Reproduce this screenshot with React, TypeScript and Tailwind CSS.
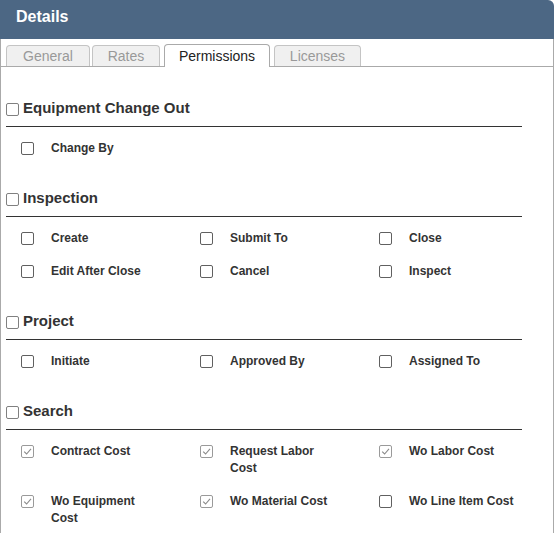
import type { ReactNode } from 'react';

type Item = { label: string; checked?: boolean };
type Section = { title: string; items: Item[] };

const sections: Section[] = [
  { title: 'Equipment Change Out', items: [{ label: 'Change By' }] },
  {
    title: 'Inspection',
    items: [
      { label: 'Create' },
      { label: 'Submit To' },
      { label: 'Close' },
      { label: 'Edit After Close' },
      { label: 'Cancel' },
      { label: 'Inspect' },
    ],
  },
  {
    title: 'Project',
    items: [{ label: 'Initiate' }, { label: 'Approved By' }, { label: 'Assigned To' }],
  },
  {
    title: 'Search',
    items: [
      { label: 'Contract Cost', checked: true },
      { label: 'Request Labor Cost', checked: true },
      { label: 'Wo Labor Cost', checked: true },
      { label: 'Wo Equipment Cost', checked: true },
      { label: 'Wo Material Cost', checked: true },
      { label: 'Wo Line Item Cost' },
    ],
  },
];

const tabs = [
  { name: 'General', w: 'w-[84px]', ml: 'ml-[5px]' },
  { name: 'Rates', w: 'w-[68px]', ml: 'ml-[2px]' },
  { name: 'Permissions', w: 'w-[106px]', ml: 'ml-[4px]', active: true },
  { name: 'Licenses', w: 'w-[87px]', ml: 'ml-[4px]' },
];

function Box({ checked, light }: { checked?: boolean; light?: boolean }) {
  return (
    <span
      className={`flex h-[13px] w-[13px] shrink-0 items-center justify-center rounded-[2px] border bg-white ${
        checked ? 'border-[#9a9a9a]' : light ? 'border-[#808080]' : 'border-[#606060]'
      }`}
    >
      {checked && (
        <svg width="9" height="9" viewBox="0 0 9 9">
          <polyline points="1.2,4.6 3.6,7 8,1.8" fill="none" stroke="#8a8a8a" strokeWidth="1.1" />
        </svg>
      )}
    </span>
  );
}

function Tab({ name, w, ml, active }: { name: string; w: string; ml: string; active?: boolean }) {
  return (
    <div
      className={`${w} ${ml} flex items-center justify-center rounded-t-[4px] border border-b-0 text-[14px] ${
        active
          ? 'mb-[-1px] h-[23px] border-[#aaa] bg-white text-[#222]'
          : 'h-[21px] border-[#c4c4c4] bg-[#f0f0f0] text-[#999]'
      }`}
    >
      {name}
    </div>
  );
}

function Heading({ children }: { children: ReactNode }) {
  return (
    <div className="flex w-[516px] items-center gap-[4px] border-b border-[#333] pb-[9px]">
      <span className="mt-[2px]">
        <Box light />
      </span>
      <span className="text-[15px] font-bold leading-[18px] text-[#333]">{children}</span>
    </div>
  );
}

function App() {
  return (
    <div className="min-h-screen bg-white font-['Liberation_Sans',Arial,sans-serif]">
      <div className="w-[554px]">
        <div className="h-[39px] rounded-tr-[6px] bg-[#4c6784] pl-[16px] pt-[8px] text-[16px] font-bold leading-[18px] text-white">
          Details
        </div>
        <div className="h-[494px] border-x border-[#aaa]">
          <div className="flex h-[28px] items-end border-b border-[#aaa]">
            {tabs.map((t) => (
              <Tab key={t.name} {...t} />
            ))}
          </div>
          <div className="pl-[5px]">
            {sections.map((s) => (
              <div key={s.title} className="pt-[32px]">
                <Heading>{s.title}</Heading>
                <div className="mt-[13px] grid grid-cols-[179px_179px_179px] gap-y-[16px] pl-[15px]">
                  {s.items.map((it) => (
                    <div key={it.label} className="flex items-start gap-[17px]">
                      <span className="mt-[2px]">
                        <Box checked={it.checked} />
                      </span>
                      <span className="w-[108px] text-[12px] font-bold leading-[17px] text-[#333]">
                        {it.label}
                      </span>
                    </div>
                  ))}
                </div>
              </div>
            ))}
          </div>
        </div>
      </div>
    </div>
  );
}

export default App;
